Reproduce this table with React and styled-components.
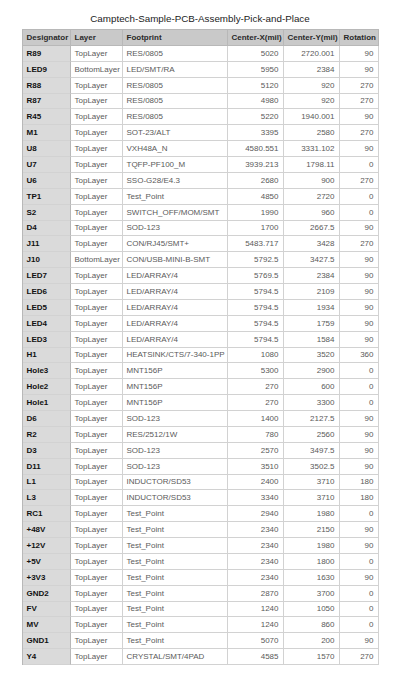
import React from 'react'
import styled, { createGlobalStyle } from 'styled-components'

const GlobalStyle = createGlobalStyle`
  body {
    margin: 0;
    background: #ffffff;
    font-family: "Liberation Sans", Arial, sans-serif;
  }
`

const Page = styled.div`
  width: 400px;
  height: 699px;
  display: flex;
  flex-direction: column;
  align-items: center;
`

const Title = styled.h1`
  margin: 0;
  padding-top: 13px;
  height: 16px;
  font-size: 9.8px;
  line-height: 12px;
  font-weight: normal;
  color: #222;
`

const Sheet = styled.table`
  width: 356px;
  table-layout: fixed;
  border-collapse: separate;
  border-spacing: 0;
  border-top: 1px solid #b8b8b8;
  border-left: 1px solid #b8b8b8;
  font-size: 8px;
`

const HeadCell = styled.th`
  box-sizing: border-box;
  height: 15.875px;
  padding: 0 4px;
  background: #c9c9c9;
  color: #2a2a2a;
  font-weight: bold;
  text-align: ${p => (p.$num ? 'right' : 'left')};
  border-right: 1px solid #b8b8b8;
  border-bottom: 1px solid #b8b8b8;
  white-space: nowrap;
  overflow: hidden;
`

const Cell = styled.td`
  box-sizing: border-box;
  height: 15.875px;
  padding: 0 4px;
  background: ${p => (p.$key ? '#dadada' : '#ffffff')};
  color: ${p => (p.$key ? '#111' : '#5a5a5a')};
  font-weight: ${p => (p.$key ? 'bold' : 'normal')};
  text-align: ${p => (p.$num ? 'right' : 'left')};
  border-right: 1px solid ${p => (p.$key ? '#b8b8b8' : '#d2d2d2')};
  border-bottom: 1px solid #d2d2d2;
  white-space: nowrap;
  overflow: hidden;
`

const columns = [
  { label: 'Designator', width: 48 },
  { label: 'Layer', width: 52 },
  { label: 'Footprint', width: 105 },
  { label: 'Center-X(mil)', width: 56, num: true },
  { label: 'Center-Y(mil)', width: 56, num: true },
  { label: 'Rotation', width: 39, num: true },
]

const rows = [
  ['R89', 'TopLayer', 'RES/0805', '5020', '2720.001', '90'],
  ['LED9', 'BottomLayer', 'LED/SMT/RA', '5950', '2384', '90'],
  ['R88', 'TopLayer', 'RES/0805', '5120', '920', '270'],
  ['R87', 'TopLayer', 'RES/0805', '4980', '920', '270'],
  ['R45', 'TopLayer', 'RES/0805', '5220', '1940.001', '90'],
  ['M1', 'TopLayer', 'SOT-23/ALT', '3395', '2580', '270'],
  ['U8', 'TopLayer', 'VXH48A_N', '4580.551', '3331.102', '90'],
  ['U7', 'TopLayer', 'TQFP-PF100_M', '3939.213', '1798.11', '0'],
  ['U6', 'TopLayer', 'SSO-G28/E4.3', '2680', '900', '270'],
  ['TP1', 'TopLayer', 'Test_Point', '4850', '2720', '0'],
  ['S2', 'TopLayer', 'SWITCH_OFF/MOM/SMT', '1990', '960', '0'],
  ['D4', 'TopLayer', 'SOD-123', '1700', '2667.5', '90'],
  ['J11', 'TopLayer', 'CON/RJ45/SMT+', '5483.717', '3428', '270'],
  ['J10', 'BottomLayer', 'CON/USB-MINI-B-SMT', '5792.5', '3427.5', '90'],
  ['LED7', 'TopLayer', 'LED/ARRAY/4', '5769.5', '2384', '90'],
  ['LED6', 'TopLayer', 'LED/ARRAY/4', '5794.5', '2109', '90'],
  ['LED5', 'TopLayer', 'LED/ARRAY/4', '5794.5', '1934', '90'],
  ['LED4', 'TopLayer', 'LED/ARRAY/4', '5794.5', '1759', '90'],
  ['LED3', 'TopLayer', 'LED/ARRAY/4', '5794.5', '1584', '90'],
  ['H1', 'TopLayer', 'HEATSINK/CTS/7-340-1PP', '1080', '3520', '360'],
  ['Hole3', 'TopLayer', 'MNT156P', '5300', '2900', '0'],
  ['Hole2', 'TopLayer', 'MNT156P', '270', '600', '0'],
  ['Hole1', 'TopLayer', 'MNT156P', '270', '3300', '0'],
  ['D6', 'TopLayer', 'SOD-123', '1400', '2127.5', '90'],
  ['R2', 'TopLayer', 'RES/2512/1W', '780', '2560', '90'],
  ['D3', 'TopLayer', 'SOD-123', '2570', '3497.5', '90'],
  ['D11', 'TopLayer', 'SOD-123', '3510', '3502.5', '90'],
  ['L1', 'TopLayer', 'INDUCTOR/SD53', '2400', '3710', '180'],
  ['L3', 'TopLayer', 'INDUCTOR/SD53', '3340', '3710', '180'],
  ['RC1', 'TopLayer', 'Test_Point', '2940', '1980', '0'],
  ['+48V', 'TopLayer', 'Test_Point', '2340', '2150', '90'],
  ['+12V', 'TopLayer', 'Test_Point', '2340', '1980', '90'],
  ['+5V', 'TopLayer', 'Test_Point', '2340', '1800', '0'],
  ['+3V3', 'TopLayer', 'Test_Point', '2340', '1630', '90'],
  ['GND2', 'TopLayer', 'Test_Point', '2870', '3700', '0'],
  ['FV', 'TopLayer', 'Test_Point', '1240', '1050', '0'],
  ['MV', 'TopLayer', 'Test_Point', '1240', '860', '0'],
  ['GND1', 'TopLayer', 'Test_Point', '5070', '200', '90'],
  ['Y4', 'TopLayer', 'CRYSTAL/SMT/4PAD', '4585', '1570', '270'],
]

function App() {
  return (
    <Page>
      <GlobalStyle />
      <Title>Camptech-Sample-PCB-Assembly-Pick-and-Place</Title>
      <Sheet>
        <colgroup>
          {columns.map(c => <col key={c.label} style={{ width: c.width }} />)}
        </colgroup>
        <thead>
          <tr>
            {columns.map(c => <HeadCell key={c.label} $num={c.num}>{c.label}</HeadCell>)}
          </tr>
        </thead>
        <tbody>
          {rows.map(r => (
            <tr key={r[0]}>
              {r.map((v, i) => (
                <Cell key={i} $key={i === 0} $num={columns[i].num}>{v}</Cell>
              ))}
            </tr>
          ))}
        </tbody>
      </Sheet>
    </Page>
  )
}

export default App
